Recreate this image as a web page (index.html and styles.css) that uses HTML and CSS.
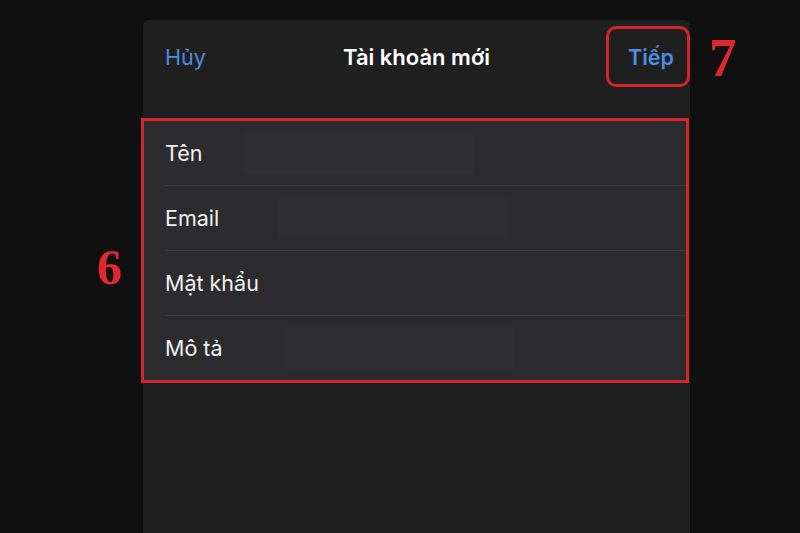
FILE: index.html
```html
<!DOCTYPE html>
<html lang="vi">
<head>
<meta charset="UTF-8">
<title>Tài khoản mới</title>
<link rel="stylesheet" href="styles.css">
</head>
<body>

<div class="stage">

    <div class="sheet">
        <!-- NAV -->
        <div class="nav">
            <span class="nav-btn">Hủy</span>
            <span class="nav-title">Tài khoản mới</span>
            <span class="nav-btn bold">Tiếp</span>
        </div>

        <!-- FORM -->
        <div class="group">
            <div class="row"><span class="label">Tên</span><span class="blur" style="margin-left: 15px;"></span></div>
            <div class="row"><span class="label">Email</span><span class="blur" style="margin-left: 49px;"></span></div>
            <div class="row"><span class="label">Mật khẩu</span></div>
            <div class="row"><span class="label">Mô tả</span><span class="blur" style="margin-left: 55px;"></span></div>
        </div>
    </div>

    <!-- annotations -->
    <div class="mark-next"></div>
    <div class="num num-6">6</div>
    <div class="num num-7">7</div>

</div>

</body>
</html>
```

FILE: styles.css
```css
body {
    margin: 0;
    background: #101010;
    font-family: "Inter", "Open Sans", "Noto Sans", sans-serif;
    color: #f2f2f2;
}

.stage {
    position: relative;
    width: 800px;
    height: 533px;
    overflow: hidden;
    padding-top: 20px;
    box-sizing: border-box;
}

.sheet {
    margin-left: 143px;
    width: 547px;
    height: 513px;
    background: #1f1f1f;
    border-radius: 6px 6px 0 0;
}

/* NAV */
.nav {
    height: 74px;
    display: flex;
    align-items: center;
    justify-content: space-between;
    padding: 0 16px 0 22px;
    position: relative;
    font-size: 21.5px;
}

.nav-btn {
    color: #4d8ce0;
}

.nav-btn.bold { font-weight: 600; }

.nav-title {
    position: absolute;
    left: 0;
    right: 0;
    text-align: center;
    font-size: 22px;
    font-weight: 600;
    color: #ffffff;
    pointer-events: none;
}

/* FORM */
.group {
    margin: 24px 0 0 -2px;
    width: 542px;
    border: 3px solid #d3252d;
    background: #2c2c2e;
}

.row {
    height: 65px;
    display: flex;
    align-items: center;
    margin-left: 21px;
    border-bottom: 1px solid #3a3a3c;
    box-sizing: border-box;
}

.row:last-child { border-bottom: none; height: 64px; }

.label {
    font-size: 21.5px;
    color: #f0f0f0;
    min-width: 64px;
}

.blur {
    width: 230px;
    height: 42px;
    background: #2e2e31;
    border-radius: 2px;
}

/* annotations */
.mark-next {
    position: absolute;
    left: 606px;
    top: 26px;
    width: 78px;
    height: 55px;
    border: 3px solid #d3252d;
    border-radius: 10px;
}

.num {
    position: absolute;
    font-family: "Liberation Serif", "DejaVu Serif", serif;
    font-weight: bold;
    color: #e0262e;
    line-height: 1;
}

.num-6 {
    left: 97px;
    top: 242px;
    font-size: 50px;
}

.num-7 {
    left: 709px;
    top: 30px;
    font-size: 55px;
}
```
